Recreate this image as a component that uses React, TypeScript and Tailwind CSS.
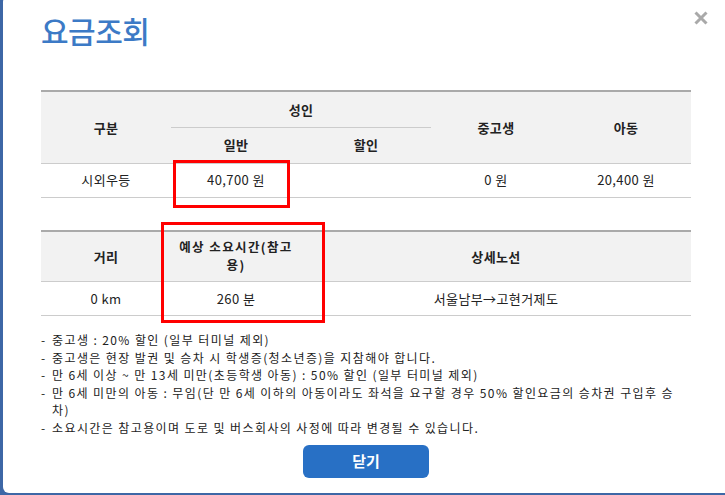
import React from "react";

const notes: React.ReactNode[] = [
  "중고생 : 20% 할인 (일부 터미널 제외)",
  "중고생은 현장 발권 및 승차 시 학생증(청소년증)을 지참해야 합니다.",
  "만 6세 이상 ~ 만 13세 미만(초등학생 아동) : 50% 할인 (일부 터미널 제외)",
  <>
    만 6세 미만의 아동 : 무임(단 만 6세 이하의 아동이라도 좌석을 요구할 경우 50% 할인요금의 승차권 구입후 승
    <br />
    차)
  </>,
  "소요시간은 참고용이며 도로 및 버스회사의 사정에 따라 변경될 수 있습니다.",
];

export default function App() {
  return (
    <div className="relative w-[725px] h-[495px] overflow-hidden bg-[#3d67a6] pl-[3px] font-['Noto_Sans_CJK_KR',sans-serif] text-[#222]">
      <div className="-mt-[4px] h-[497px] w-[728px] rounded-[6px] bg-white pl-[38px] pt-[14px]">
        <h1 className="text-[30px] leading-[40px] text-[#3c7ac6] font-medium tracking-[-0.5px]">요금조회</h1>

        {/* fare table */}
        <table className="mt-[40px] w-[650px] table-fixed border-collapse text-[13px] tracking-[0.4px]">
          <colgroup>
            <col className="w-[130px]" />
            <col className="w-[130px]" />
            <col className="w-[130px]" />
            <col className="w-[130px]" />
            <col className="w-[130px]" />
          </colgroup>
          <thead className="bg-[#f2f2f2] font-bold">
            <tr className="border-t-2 border-[#aaa]">
              <th rowSpan={2}>구분</th>
              <th colSpan={2} className="h-[36px] border-b border-[#ccc]">성인</th>
              <th rowSpan={2}>중고생</th>
              <th rowSpan={2}>아동</th>
            </tr>
            <tr>
              <th className="h-[36px]">일반</th>
              <th>할인</th>
            </tr>
          </thead>
          <tbody>
            <tr className="h-[34px] border-y border-[#ccc] text-center">
              <td>시외우등</td>
              <td>40,700 원</td>
              <td></td>
              <td>0 원</td>
              <td>20,400 원</td>
            </tr>
          </tbody>
        </table>

        {/* route table */}
        <table className="mt-[32px] w-[650px] table-fixed border-collapse text-[13px] tracking-[0.4px]">
          <colgroup>
            <col className="w-[130px]" />
            <col className="w-[130px]" />
            <col className="w-[390px]" />
          </colgroup>
          <thead className="bg-[#f2f2f2] font-bold">
            <tr className="h-[51px] border-t-2 border-[#aaa] border-b border-b-[#ccc]">
              <th>거리</th>
              <th className="text-[12.5px] leading-[18px] tracking-[1.4px] whitespace-nowrap">
                예상 소요시간(참고
                <br />
                용)
              </th>
              <th>상세노선</th>
            </tr>
          </thead>
          <tbody>
            <tr className="h-[34px] border-b border-[#ccc] text-center">
              <td>0 km</td>
              <td>260 분</td>
              <td>서울남부→고현거제도</td>
            </tr>
          </tbody>
        </table>

        <ul className="mt-[15px] w-[650px] text-[12px] leading-[17.5px] tracking-[1.4px] whitespace-nowrap">
          {notes.map((n, i) => (
            <li key={i} className="flex">
              <span className="w-[11px] shrink-0">-</span>
              <span>{n}</span>
            </li>
          ))}
        </ul>

        <button className="mt-[9px] ml-[262px] block h-[33px] w-[126px] rounded-[6px] bg-[#2870c5] text-[15px] font-bold text-white">
          닫기
        </button>
      </div>

      {/* highlight boxes */}
      <div className="absolute left-[173px] top-[160px] h-[48px] w-[117px] border-[3px] border-[#f00]" />
      <div className="absolute left-[161px] top-[222px] h-[101px] w-[164px] border-[3px] border-[#f00]" />

      {/* close */}
      <svg className="absolute left-[694px] top-[11px] h-[14px] w-[14px]" viewBox="0 0 14 14">
        <path d="M1.5 1.5l11 11M12.5 1.5l-11 11" stroke="#a9a9a9" strokeWidth={3} />
      </svg>
    </div>
  );
}
